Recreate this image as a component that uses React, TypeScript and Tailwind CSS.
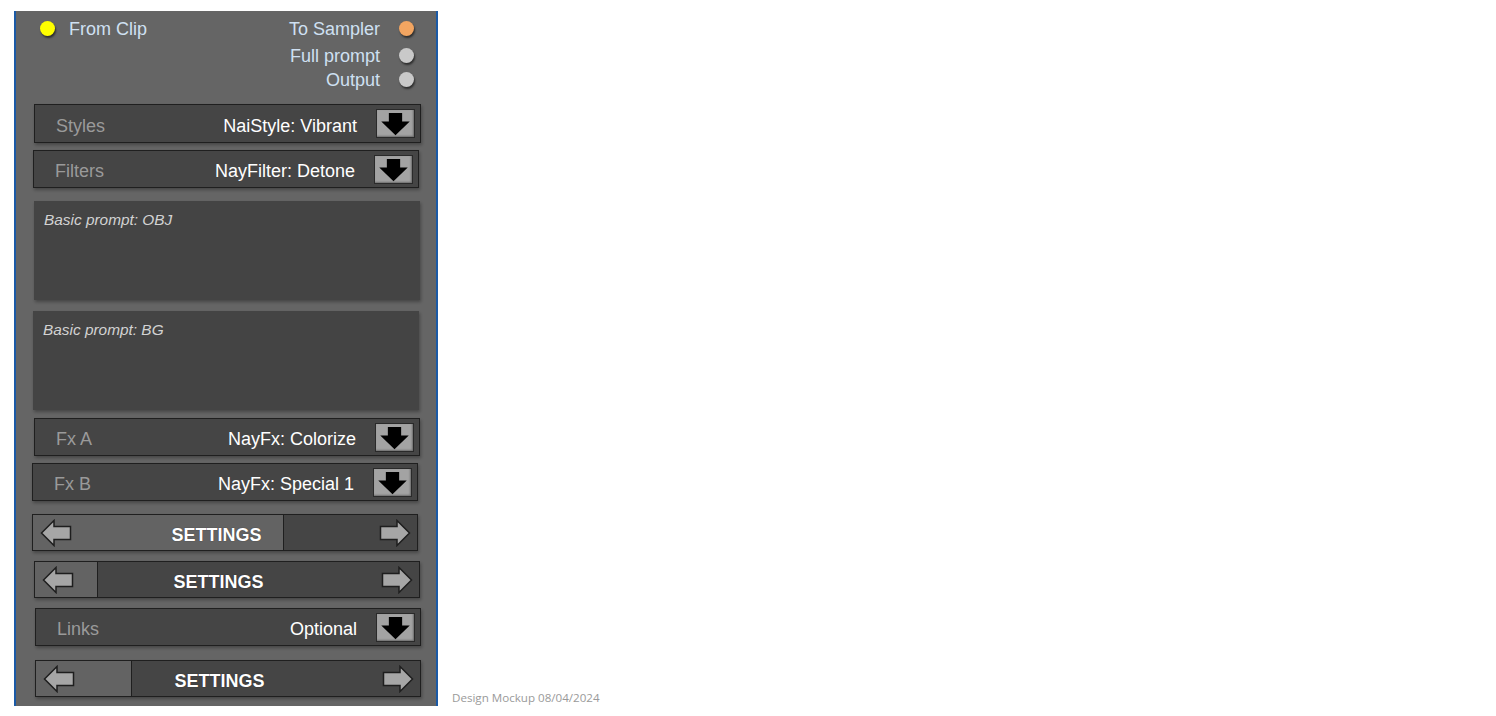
import React from "react";

const DownArrow = () => (
  <svg width="39" height="29" viewBox="0 0 39 29">
    <polygon points="12.5,3.5 26.5,3.5 26.5,12.5 34.5,12.5 19.5,27 4.5,12.5 12.5,12.5" fill="#000" />
  </svg>
);

const SideArrow = ({ dir }: { dir: "left" | "right" }) => (
  <svg
    width="32"
    height="28"
    viewBox="0 0 32 28"
    className={dir === "right" ? "-scale-x-100" : ""}
  >
    <polygon
      points="1.5,14 14,1.5 14,7.5 30.5,7.5 30.5,20.5 14,20.5 14,26.5"
      fill="#a6a6a6"
      stroke="#1e1e1e"
      strokeWidth="1.5"
      strokeLinejoin="miter"
    />
  </svg>
);

function Port({ color }: { color: string }) {
  return (
    <div
      className="w-[15px] h-[15px] rounded-full shadow-[1px_2px_2px_rgba(0,0,0,0.55)]"
      style={{ background: color }}
    />
  );
}

function Dropdown({
  label,
  value,
  className,
}: {
  label: string;
  value: string;
  className: string;
}) {
  return (
    <div
      className={`w-[386px] h-[38px] flex items-center bg-[#454545] border border-[#1f1f1f] shadow-[1px_2px_3px_rgba(0,0,0,0.3)] pl-[21px] pr-[5px] ${className}`}
    >
      <span className="text-[#9a9a9a] text-[18px] leading-none pt-[4px]">{label}</span>
      <span className="ml-auto text-white text-[18px] leading-none pt-[4px] mr-[19px]">
        {value}
      </span>
      <div className="w-[39px] h-[29px] bg-[#a3a3a3] border border-[#2a2a2a] shadow-[inset_-1px_-1px_2px_rgba(0,0,0,0.35)] flex items-center justify-center">
        <DownArrow />
      </div>
    </div>
  );
}

function SettingsBar({ fill, className }: { fill: number; className: string }) {
  return (
    <div
      className={`relative w-[386px] h-[37px] bg-[#454545] border border-[#1f1f1f] shadow-[1px_2px_3px_rgba(0,0,0,0.3)] ${className}`}
    >
      <div
        className="absolute left-0 top-0 bottom-0 bg-[#636363] border-r border-[#1f1f1f]"
        style={{ width: fill }}
      />
      <div className="relative h-full flex items-center pl-[7px] pr-[6px]">
        <SideArrow dir="left" />
        <span className="flex-1 text-center pr-[18px] pt-[5px] text-white font-bold text-[18px] leading-none [text-shadow:0_0_1px_rgba(0,0,0,0.6)]">
          SETTINGS
        </span>
        <SideArrow dir="right" />
      </div>
    </div>
  );
}

function PromptBox({ text, className }: { text: string; className: string }) {
  return (
    <div
      className={`w-[386px] h-[99px] bg-[#444444] shadow-[1px_2px_3px_rgba(0,0,0,0.3)] px-[10px] pt-[7px] ${className}`}
    >
      <span className="italic text-[15.4px] text-[#d2d2d2] leading-none">{text}</span>
    </div>
  );
}

export default function App() {
  return (
    <div className="w-[1496px] h-[716px] bg-white flex items-end font-['Liberation_Sans',Arial,sans-serif]">
      {/* Node panel */}
      <div className="ml-[14px] mb-[10px] w-[424px] h-[695px] bg-[#656565] border-x-2 border-[#1b5aa6] flex flex-col">
        {/* Ports */}
        <div className="pt-[5px] pl-[24px] pr-[22px] text-[18px] text-[#cfe0f2] leading-none">
          <div className="h-6 flex items-center">
            <Port color="#ffff00" />
            <span className="ml-[14px] pt-[2px]">From Clip</span>
            <span className="ml-auto mr-[19px] pt-[2px]">To Sampler</span>
            <Port color="#f2a561" />
          </div>
          <div className="h-6 mt-[3px] flex items-center justify-end">
            <span className="mr-[19px] pt-[2px]">Full prompt</span>
            <Port color="#c9c9c9" />
          </div>
          <div className="h-6 flex items-center justify-end">
            <span className="mr-[19px] pt-[2px]">Output</span>
            <Port color="#c9c9c9" />
          </div>
        </div>

        <Dropdown label="Styles" value="NaiStyle: Vibrant" className="ml-[18px] mt-[13px] w-[387px] h-[39px]" />
        <Dropdown label="Filters" value="NayFilter: Detone" className="ml-[17px] mt-[7px]" />

        <PromptBox text="Basic prompt: OBJ" className="ml-[18px] mt-[13px]" />
        <PromptBox text="Basic prompt: BG" className="ml-[17px] mt-[11px]" />

        <Dropdown label="Fx A" value="NayFx: Colorize" className="ml-[18px] mt-[8px]" />
        <Dropdown label="Fx B" value="NayFx: Special 1" className="ml-[16px] mt-[7px]" />

        <SettingsBar fill={251} className="ml-[16px] mt-[13px]" />
        <SettingsBar fill={63} className="ml-[18px] mt-[10px]" />

        <Dropdown label="Links" value="Optional" className="ml-[19px] mt-[10px] h-[37px]" />

        <SettingsBar fill={96} className="ml-[19px] mt-[14px]" />
      </div>

      <div className="ml-[14px] mb-[11px] text-[11.6px] leading-[15px] text-[#9a9a9a] font-['Open_Sans',sans-serif]">
        Design Mockup 08/04/2024
      </div>
    </div>
  );
}
